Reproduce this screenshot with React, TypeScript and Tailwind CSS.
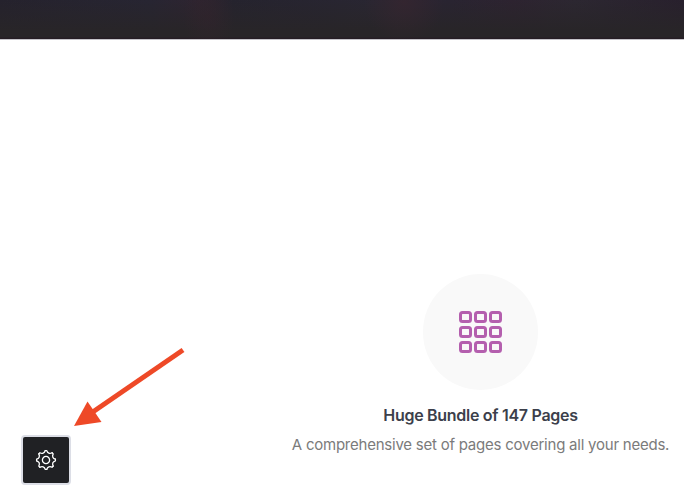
const cells = Array.from({ length: 9 }, (_, i) => i);
const teeth = [0, 45, 90, 135, 180, 225, 270, 315];

function GridIcon() {
  return (
    <div className="grid grid-cols-3 gap-x-[2.5px] gap-y-[3px]">
      {cells.map((cell) => (
        <span key={cell} className="h-[12px] w-[12.5px] rounded-[3.5px] border-3 border-[#b45fae]" />
      ))}
    </div>
  );
}

function GearIcon() {
  return (
    <svg width="22" height="22" viewBox="-11 -11 22 22" fill="none" stroke="currentColor" strokeWidth="1.3" strokeLinecap="round" strokeLinejoin="round" aria-hidden="true">
      {teeth.map((angle) => (
        <path key={angle} transform={`rotate(${angle})`} d="M-.8-9.4L.8-9.4C1.5-6.8 3.7-5.9 6.08-7.21" />
      ))}
      <circle r="3.6" />
    </svg>
  );
}

function Feature() {
  return (
    <section className="ml-[277px] flex w-[407px] flex-col items-center pt-[234px] text-center">
      <div className="flex h-[116px] w-[115px] items-center justify-center rounded-full bg-[#f9f9f9]">
        <GridIcon />
      </div>
      <h2 className="mt-[13px] whitespace-nowrap text-[16px] leading-6 font-[560] tracking-[-0.29px] text-[#3c3f4b]">
        Huge Bundle of 147 Pages
      </h2>
      <p className="mt-[6px] whitespace-nowrap text-[15px] leading-6 tracking-[-0.23px] text-[#7b7b7b]">
        A comprehensive set of pages covering all your needs.
      </p>
    </section>
  );
}

function Arrow() {
  return (
    <svg className="absolute top-[340px] left-[70px]" width="120" height="90" viewBox="70 340 120 90" aria-hidden="true">
      <path d="M183 350 92 412.5" stroke="#ee4927" strokeWidth="5" />
      <path d="M74 426 87.5 401.5 101.5 422Z" fill="#ee4927" />
    </svg>
  );
}

export default function App() {
  return (
    <div className="relative h-[498px] w-[684px] overflow-hidden bg-white font-['Inter','Liberation_Sans',sans-serif]">
      <header className="h-10 border-b border-[#c5c3c9] bg-[#28242e] bg-[radial-gradient(ellipse_40px_40px_at_404px_2px,#38252fb0,transparent),radial-gradient(ellipse_26px_40px_at_209px_16px,#33232c80,transparent),linear-gradient(to_bottom,transparent_37px,#251d24_38px),linear-gradient(to_bottom,transparent,#282528_80%),linear-gradient(90deg,#25222d_0%,#272532_22%,#2e2430_29%,#25232e_34%,#292632_55%,#292431_66%,#2d2330_75%,#2c2731_84%,#28202d_100%)]" />
      <main>
        <Feature />
      </main>
      <Arrow />
      <button
        aria-label="Settings"
        className="absolute top-[435px] left-[21px] flex size-[50px] items-center justify-center rounded-[4px] border-2 border-[#dcdee6] bg-[#202124] text-white"
      >
        <GearIcon />
      </button>
    </div>
  );
}
